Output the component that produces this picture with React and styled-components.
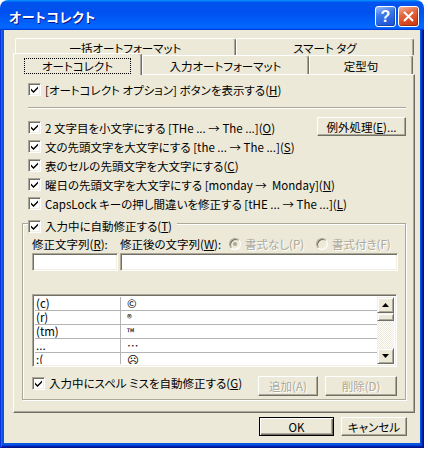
import React from "react";
import styled, { createGlobalStyle } from "styled-components";

const GlobalStyle = createGlobalStyle`
  html, body { margin: 0; padding: 0; background: #fff; }
  body {
    font-family: "Noto Sans CJK JP", "DejaVu Sans", sans-serif;
    font-size: 11.5px;
    line-height: 14px;
    font-feature-settings: "palt";
    color: #000;
  }
`;

const Window = styled.div`
  width: 424px;
  height: 448px;
  display: flex;
  flex-direction: column;
  border-radius: 8px 8px 0 0;
  overflow: hidden;
`;

const TitleBar = styled.div`
  height: 30px;
  box-sizing: border-box;
  display: flex;
  align-items: center;
  padding: 3px 5px 0 9px;
  background: linear-gradient(180deg, #0997ff, #0053ee 8%, #0050ee 40%, #06f 88%, #06f 93%, #005bff 95%, #003dd7 96%, #003dd7);
`;

const Title = styled.div`
  flex: 1;
  color: #fff;
  font-weight: bold;
  font-size: 13px;
  letter-spacing: 0.5px;
  text-shadow: 1px 1px #0f1089;
`;

const TitleButtons = styled.div`
  display: flex;
  gap: 2px;
`;

const CaptionButton = styled.div`
  width: 21px;
  height: 21px;
  box-sizing: border-box;
  border: 1px solid #fff;
  border-radius: 3px;
  display: flex;
  align-items: center;
  justify-content: center;
  color: #fff;
  font-family: "Liberation Sans", sans-serif;
  font-weight: bold;
  font-size: 16px;
  background: ${(p) =>
    p.$close
      ? "linear-gradient(160deg, #f4b39b 0%, #e36a44 35%, #d9481f 70%, #c23c17 100%)"
      : "linear-gradient(160deg, #9dbcf6 0%, #3f7cec 35%, #2662e0 70%, #1b52d2 100%)"};
  box-shadow: inset -1px -1px rgba(0, 0, 0, 0.25);
`;

const Frame = styled.div`
  flex: 1;
  display: flex;
  padding: 0 4px 5px;
  background: #0855dd;
  box-shadow: inset 1px 0 #0831d9, inset -1px -1px #00138c, inset 2px 0 #166aee,
    inset -2px -2px #001ea0, inset -3px -3px #003bda;
`;

const Client = styled.div`
  flex: 1;
  display: flex;
  flex-direction: column;
  background: #ece9d8;
  padding: 8px 0 0 9px;
`;

const TabRow = styled.div`
  display: flex;
  align-items: flex-end;
  height: ${(p) => p.$h}px;
  padding-left: 2px;
`;

const Tab = styled.div`
  position: relative;
  width: ${(p) => (p.$active ? p.$w + 2 : p.$w)}px;
  height: ${(p) => (p.$active ? p.$h + 3 : p.$h)}px;
  margin: ${(p) => (p.$active ? "0 0 -1px -2px" : "0")};
  z-index: ${(p) => (p.$active ? 2 : 1)};
  box-sizing: border-box;
  display: flex;
  align-items: center;
  justify-content: center;
  padding-top: 2px;
  background: #ece9d8;
  border-top: 1px solid #fff;
  border-left: 1px solid #fff;
  border-right: 1px solid #716f64;
  border-radius: 2px 3px 0 0;
  box-shadow: inset -1px 0 #aca899;
  white-space: nowrap;
`;

const Focus = styled.span`
  outline: 1px dotted #000;
  padding: 0 17px;
  line-height: 14px;
`;

const Panel = styled.div`
  width: 402px;
  height: 339px;
  box-sizing: border-box;
  padding: 5px 8px 0 8px;
  border: 1px solid;
  border-color: #fff #716f64 #716f64 #fff;
  box-shadow: inset -1px -1px #aca899;
  display: flex;
  flex-direction: column;
`;

const CheckRow = styled.div`
  display: flex;
  align-items: center;
  gap: 4px;
  height: ${(p) => p.$h || 19}px;
  margin-left: ${(p) => p.$indent || 0}px;
`;

const Caption = styled.span`
  white-space: pre;
`;

const Box = styled.span`
  width: 13px;
  height: 13px;
  flex: none;
  box-sizing: border-box;
  background: #fff;
  border: 1px solid;
  border-color: #aca899 #fff #fff #aca899;
  box-shadow: inset 1px 1px #716f64, inset -1px -1px #f1efe2;
  display: flex;
  align-items: center;
  justify-content: center;
`;

const Acc = styled.span`
  text-decoration: underline;
  text-underline-offset: 1px;
`;

const Separator = styled.div`
  height: 0;
  margin: 8px 0 9px 6px;
  border-top: 1px solid #aca899;
  border-bottom: 1px solid #fff;
`;

const OptionBlock = styled.div`
  display: flex;
  flex-direction: column;
  margin-left: 6px;
`;

const Button = styled.div`
  width: ${(p) => p.$w}px;
  height: ${(p) => p.$h || 19}px;
  flex: none;
  box-sizing: border-box;
  display: flex;
  align-items: center;
  justify-content: center;
  background: #ece9d8;
  margin-top: ${(p) => p.$mt || 0}px;
  border: 1px solid;
  border-color: ${(p) => (p.$default ? "#000" : "#fff #716f64 #716f64 #fff")};
  box-shadow: ${(p) =>
    p.$default
      ? "inset 1px 1px #fff, inset -1px -1px #716f64, inset -2px -2px #aca899"
      : "inset -1px -1px #aca899"};
  color: ${(p) => (p.$disabled ? "#aca899" : "#000")};
  text-shadow: ${(p) => (p.$disabled ? "1px 1px #fff" : "none")};
  white-space: nowrap;
`;

const SideButton = styled(Button)`
  margin-left: auto;
`;

const GroupBox = styled.div`
  margin-top: 10px;
  padding: 0 7px 3px 9px;
  border: 1px solid #aca899;
  box-shadow: inset 1px 1px #fff, 1px 1px #fff;
  display: flex;
  flex-direction: column;
`;

const Legend = styled(CheckRow)`
  height: 14px;
  margin: -5px 0 0 -4px;
  padding-right: 5px;
  align-self: flex-start;
  background: #ece9d8;
`;

const FieldLabels = styled.div`
  display: flex;
  align-items: center;
  height: 14px;
  margin-top: 4px;
  white-space: pre;
`;

const FieldLabel = styled.div`
  width: ${(p) => p.$w}px;
  flex: none;
`;

const RadioOption = styled.div`
  width: ${(p) => p.$w}px;
  flex: none;
  display: flex;
  align-items: center;
  gap: 4px;
  color: #aca899;
  text-shadow: 1px 1px #fff;
`;

const Radio = styled.span`
  width: 12px;
  height: 12px;
  box-sizing: border-box;
  border-radius: 50%;
  border: 1px solid;
  border-color: #aca899 #fff #fff #aca899;
  box-shadow: inset 1px 1px #716f64, inset -1px -1px #f1efe2;
  background: #ece9d8;
  display: flex;
  align-items: center;
  justify-content: center;
  &::after {
    content: "";
    width: 4px;
    height: 4px;
    border-radius: 50%;
    background: ${(p) => (p.$checked ? "#aca899" : "transparent")};
  }
`;

const InputRow = styled.div`
  display: flex;
  gap: 2px;
  margin-top: 2px;
`;

const Sunken = styled.div`
  box-sizing: border-box;
  background: #fff;
  border: 1px solid;
  border-color: #aca899 #fff #fff #aca899;
  box-shadow: inset 1px 1px #716f64, inset -1px -1px #f1efe2;
`;

const TextBox = styled(Sunken)`
  width: ${(p) => p.$w}px;
  height: 18px;
`;

const ListBox = styled(Sunken)`
  width: 365px;
  height: 73px;
  margin-top: 23px;
  padding: 2px;
  display: flex;
`;

const Rows = styled.div`
  flex: 1;
  display: flex;
  flex-direction: column;
  overflow: hidden;
`;

const Row = styled.div`
  display: grid;
  grid-template-columns: 86px 1fr;
  height: 13px;
  flex: none;
  border-bottom: 1px solid #b4b4b4;
`;

const Cell = styled.div`
  display: flex;
  align-items: flex-end;
  padding-left: ${(p) => p.$pad}px;
  border-right: ${(p) => (p.$first ? "1px solid #b4b4b4" : "none")};
  font-size: ${(p) => p.$size || 11.5}px;
  line-height: 13px;
  white-space: nowrap;
`;

const ScrollBar = styled.div`
  width: 17px;
  display: flex;
  flex-direction: column;
`;

const ScrollButton = styled.div`
  height: ${(p) => p.$h}px;
  flex: none;
  box-sizing: border-box;
  background: #ece9d8;
  border: 1px solid;
  border-color: #f1efe2 #716f64 #716f64 #f1efe2;
  box-shadow: inset 1px 1px #fff, inset -1px -1px #aca899;
  display: flex;
  align-items: center;
  justify-content: center;
`;

const Track = styled.div`
  flex: 1;
  background-color: #ece9d8;
  background-image: repeating-conic-gradient(#fff 0 25%, #ece9d8 0 50%);
  background-size: 2px 2px;
`;

const BottomRow = styled.div`
  display: flex;
  align-items: flex-start;
  margin-top: 9px;
`;

const BottomButtons = styled.div`
  margin-left: auto;
  margin-right: 1px;
  display: flex;
  gap: 7px;
`;

const Footer = styled.div`
  display: flex;
  justify-content: flex-end;
  gap: 7px;
  width: 402px;
  box-sizing: border-box;
  padding-right: 8px;
  margin-top: 4px;
`;

const Check = () => (
  <Box>
    <svg width="9" height="9" viewBox="0 0 9 9">
      <path d="M1 3.5 L3.5 6 L8 1.5 V3.5 L3.5 8 L1 5.5 Z" fill="#000" />
    </svg>
  </Box>
);

const Arrow = ({ down }) => (
  <svg width="7" height="4" viewBox="0 0 7 4">
    <path d={down ? "M0 0 H7 L3.5 4 Z" : "M0 4 H7 L3.5 0 Z"} fill="#000" />
  </svg>
);

const Labelled = ({ text, k, h, indent, children }) => (
  <CheckRow $h={h} $indent={indent}>
    <Check />
    <Caption>
      {text}(<Acc>{k}</Acc>)
    </Caption>
    {children}
  </CheckRow>
);

const options = [
  { text: "2 文字目を小文字にする [THe ... → The ...]", key: "O" },
  { text: "文の先頭文字を大文字にする [the ... → The ...]", key: "S" },
  { text: "表のセルの先頭文字を大文字にする", key: "C" },
  { text: "曜日の先頭文字を大文字にする [monday →  Monday]", key: "N" },
  { text: "CapsLock キーの押し間違いを修正する [tHE ... → The ...]", key: "L" },
];

const entries = [
  ["(c)", "©", 11.5],
  ["(r)", "®", 10],
  ["(tm)", "™", 10],
  ["...", "…", 11.5],
  [":(", "☹", 11.5],
];

export default function App() {
  return (
    <>
      <GlobalStyle />
      <Window>
        <TitleBar>
          <Title>オートコレクト</Title>
          <TitleButtons>
            <CaptionButton>?</CaptionButton>
            <CaptionButton $close>
              <svg width="11" height="11" viewBox="0 0 11 11">
                <path d="M1 1 L10 10 M10 1 L1 10" stroke="#fff" strokeWidth="2" />
              </svg>
            </CaptionButton>
          </TitleButtons>
        </TitleBar>
        <Frame>
          <Client>
            <TabRow $h={17}>
              <Tab $w={221} $h={17}>一括オートフォーマット</Tab>
              <Tab $w={178} $h={17}>スマート タグ</Tab>
            </TabRow>
            <TabRow $h={19}>
              <Tab $w={127} $h={19} $active>
                <Focus>オートコレクト</Focus>
              </Tab>
              <Tab $w={167} $h={19}>入力オートフォーマット</Tab>
              <Tab $w={104} $h={19}>定型句</Tab>
            </TabRow>
            <Panel>
              <Labelled
                indent={6}
                text="[オートコレクト オプション] ボタンを表示する"
                k="H"
              />
              <Separator />
              <OptionBlock>
                {options.map((o, i) => (
                  <Labelled key={o.key} text={o.text} k={o.key}>
                    {i === 0 && (
                      <SideButton $w={89} $mt={-2}>
                        <Caption>
                          例外処理(<Acc>E</Acc>)...
                        </Caption>
                      </SideButton>
                    )}
                  </Labelled>
                ))}
              </OptionBlock>
              <GroupBox>
                <Legend>
                  <Check />
                  <Caption>
                    入力中に自動修正する(<Acc>T</Acc>)
                  </Caption>
                </Legend>
                <FieldLabels>
                  <FieldLabel $w={88}>
                    修正文字列(<Acc>R</Acc>):
                  </FieldLabel>
                  <FieldLabel $w={109}>
                    修正後の文字列(<Acc>W</Acc>):
                  </FieldLabel>
                  <RadioOption $w={87}>
                    <Radio $checked />
                    <Caption>書式なし(P)</Caption>
                  </RadioOption>
                  <RadioOption $w={80}>
                    <Radio />
                    <Caption>書式付き(F)</Caption>
                  </RadioOption>
                </FieldLabels>
                <InputRow>
                  <TextBox $w={86} />
                  <TextBox $w={278} />
                </InputRow>
                <ListBox>
                  <Rows>
                    {entries.map(([from, to, size]) => (
                      <Row key={from}>
                        <Cell $first $pad={1}>{from}</Cell>
                        <Cell $pad={6} $size={size}>{to}</Cell>
                      </Row>
                    ))}
                  </Rows>
                  <ScrollBar>
                    <ScrollButton $h={16}>
                      <Arrow />
                    </ScrollButton>
                    <ScrollButton $h={8} />
                    <Track />
                    <ScrollButton $h={16}>
                      <Arrow down />
                    </ScrollButton>
                  </ScrollBar>
                </ListBox>
                <BottomRow>
                  <Labelled h={14} text="入力中にスペル ミスを自動修正する" k="G" />
                  <BottomButtons>
                    <Button $w={60} $h={20} $disabled>
                      追加(A)
                    </Button>
                    <Button $w={72} $h={20} $disabled>
                      削除(D)
                    </Button>
                  </BottomButtons>
                </BottomRow>
              </GroupBox>
            </Panel>
            <Footer>
              <Button $w={75} $default>
                OK
              </Button>
              <Button $w={66}>キャンセル</Button>
            </Footer>
          </Client>
        </Frame>
      </Window>
    </>
  );
}
